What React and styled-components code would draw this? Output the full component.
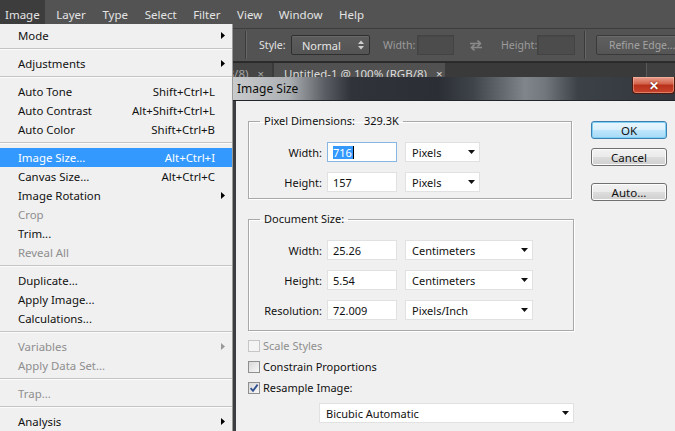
import React from 'react';
import styled, { createGlobalStyle } from 'styled-components';

const UI = `"Noto Sans", "Open Sans", sans-serif`;

const GlobalStyle = createGlobalStyle`
  html, body { margin: 0; padding: 0; background: #535353; }
  body { width: 675px; height: 431px; overflow: hidden; font-family: ${UI}; }
  * { box-sizing: border-box; }
`;

const Screen = styled.div`
  position: relative;
  width: 675px;
  height: 431px;
  overflow: hidden;
  background: #282828;
  display: flex;
  flex-direction: column;
`;

/* ---------- Photoshop app chrome ---------- */
const MenuBar = styled.div`
  height: 28px;
  flex: none;
  background: #535353;
  display: flex;
  align-items: flex-start;
  gap: 6.6px;
  font-size: 11.5px;
  color: #e4e4e4;
`;

const MenuTitle = styled.div`
  height: 24px;
  padding: 0 5px;
  display: flex;
  align-items: center;
  padding-top: 4px;
  background: ${p => (p.$open ? '#3d3d3d' : 'transparent')};
`;

const OptionsBar = styled.div`
  height: 34px;
  flex: none;
  background: #535353;
  border-top: 1px solid #3d3d3d;
  border-bottom: 1px solid #2c2c2c;
  display: flex;
  align-items: center;
  padding-left: 245px;
  font-size: 10.6px;
`;

const Groove = styled.div`
  width: 2px;
  height: 28px;
  flex: none;
  margin-left: ${p => p.$ml || 0}px;
  border-left: 1px solid #3b3b3b;
  border-right: 1px solid #666;
`;

const OptLabel = styled.span`
  width: ${p => p.$w}px;
  margin-left: ${p => p.$ml}px;
  flex: none;
  white-space: nowrap;
  color: ${p => (p.$dim ? '#9b9b9b' : '#e2e2e2')};
`;

const DarkSelect = styled.div`
  width: 79px;
  height: 20px;
  margin-left: 7px;
  flex: none;
  display: flex;
  align-items: center;
  justify-content: space-between;
  padding: 0 5px 0 10px;
  background: linear-gradient(#5d5d5d, #545454);
  border: 1px solid #2f2f2f;
  border-radius: 2px;
  box-shadow: inset 0 1px 0 #686868;
  color: #e6e6e6;
  font-size: 11px;
`;

const DarkInput = styled.div`
  width: ${p => p.$w}px;
  height: 20px;
  margin-left: ${p => p.$ml}px;
  flex: none;
  background: #4c4c4c;
  border: 1px solid #434343;
  box-shadow: inset 1px 1px 0 #474747;
`;

const SwapIcon = styled.svg`
  margin-left: 14px;
  flex: none;
`;

const DarkButton = styled.div`
  width: 92px;
  height: 20px;
  margin-left: 10px;
  flex: none;
  display: flex;
  align-items: center;
  padding-left: 12px;
  background: linear-gradient(#5f5f5f, #555);
  border: 1px solid #3a3a3a;
  border-radius: 2px;
  box-shadow: inset 0 1px 0 #6a6a6a;
  color: #a4a4a4;
  font-size: 10.4px;
  white-space: nowrap;
`;

const TabBar = styled.div`
  height: 26px;
  flex: none;
  background: #3a3a3a;
  border-top: 1px solid #2a2a2a;
  display: flex;
`;

const DocTab = styled.div`
  width: ${p => p.$w}px;
  margin-left: ${p => p.$ml || 0}px;
  flex: none;
  display: flex;
  align-items: flex-start;
  justify-content: ${p => (p.$right ? 'flex-end' : 'flex-start')};
  gap: 9px;
  padding: 3px 8px 0 10px;
  white-space: nowrap;
  overflow: hidden;
  background: ${p => (p.$active ? '#515151' : '#454545')};
  color: ${p => (p.$active ? '#dcdcdc' : '#a6a6a6')};
  font-size: 11.5px;
`;

const PanelEdge = styled.div`
  margin-left: auto;
  width: 29px;
  border-left: 1px solid #5a5a5a;
  background: #404040;
`;

const Workspace = styled.div`
  flex: 1;
  background: #282828;
`;

/* ---------- Image menu ---------- */
const Dropdown = styled.div`
  position: absolute;
  left: 0;
  top: 24px;
  width: 233px;
  bottom: 0;
  background: #f0f0f0;
  border-right: 1px solid #9a9a9a;
  padding-top: 2px;
  font-size: 11.4px;
`;

const MenuRow = styled.div`
  height: 19px;
  display: flex;
  align-items: center;
  padding-left: 18px;
  white-space: nowrap;
  color: ${p => (p.$active ? '#fff' : p.$disabled ? '#8e8e8e' : '#111')};
  background: ${p => (p.$active ? '#3399ff' : 'transparent')};
`;

const Shortcut = styled.span`
  margin-left: auto;
`;

const ArrowCell = styled.span`
  width: 17px;
  flex: none;
  display: flex;
  align-items: center;
  padding-left: 6px;
  margin-left: ${p => (p.$push ? 'auto' : '0')};
`;

const MenuSep = styled.div`
  height: 9px;
  padding-top: 3px;
  &::before {
    content: '';
    display: block;
    height: 1px;
    background: #c4c4c4;
    box-shadow: 0 1px 0 #fbfbfb;
  }
`;

/* ---------- Image Size dialog ---------- */
const Dialog = styled.div`
  position: absolute;
  left: 233px;
  top: 77px;
  right: 0;
  bottom: 0;
  display: flex;
  flex-direction: column;
  font-size: 11px;
  color: #111;
`;

const TitleBar = styled.div`
  height: 24px;
  flex: none;
  display: flex;
  align-items: flex-start;
  border-bottom: 1px solid #22262b;
  background: linear-gradient(
    90deg,
    #c8cacc 0px,
    #aeb1b4 55px,
    #5a5e64 92px,
    #30343a 118px,
    #2b2f35 205px,
    #3f434a 240px,
    #80848b 292px,
    #72767d 312px,
    #3c4047 345px,
    #33373d 442px
  );
`;

const TitleText = styled.span`
  padding: 3px 0 0 4px;
  font-size: 12px;
  color: #0c0c0c;
`;

const CloseButton = styled.div`
  margin-left: auto;
  width: 43px;
  height: 17px;
  display: flex;
  align-items: center;
  justify-content: center;
  border: 1px solid #4a1a10;
  border-top: none;
  border-radius: 0 0 4px 4px;
  background: linear-gradient(#e8a08e 0%, #d3644c 42%, #b9321b 52%, #c8452c 100%);
  box-shadow: inset 0 0 0 1px rgba(255, 200, 180, 0.45);
  color: #fff;
  font-size: 12px;
  font-weight: bold;
  text-shadow: 0 0 2px #5a1005;
`;

const Body = styled.div`
  flex: 1;
  display: flex;
  gap: 17px;
  background: #f0f0f0;
  border-left: 3px solid #3c3d40;
  padding-left: 12px;
`;

const LeftCol = styled.div`
  width: 326px;
  flex: none;
  padding-top: 12px;
  display: flex;
  flex-direction: column;
  align-items: flex-start;
`;

const Group = styled.fieldset`
  margin: ${p => p.$mt || 0}px 0 0 0;
  padding: ${p => p.$pt}px 0 ${p => p.$pb}px 0;
  width: ${p => p.$w}px;
  min-width: 0;
  border: 1px solid #a8a8a8;
  box-shadow: 1px 1px 0 #fff, inset 1px 1px 0 #fff;
  display: flex;
  flex-direction: column;
  gap: 10px;
`;

const Legend = styled.legend`
  margin-left: 11px;
  padding: 0 4px;
  font-size: 11px;
  line-height: 16px;
  color: #111;
`;

const LegendValue = styled.span`
  margin-left: 9px;
`;

const FieldRow = styled.div`
  height: 20px;
  display: flex;
  align-items: center;
`;

const FieldLabel = styled.span`
  width: 73px;
  flex: none;
  text-align: right;
  margin-right: 5px;
  white-space: nowrap;
`;

const TextBox = styled.div`
  width: 70px;
  height: 20px;
  flex: none;
  display: flex;
  align-items: center;
  padding-left: 5px;
  background: #fff;
  border: 1px solid ${p => (p.$focus ? '#86b6e3' : '#e1e1e1')};
`;

const Selected = styled.span`
  background: #3399ff;
  color: #fff;
  line-height: 13px;
  padding-right: 1px;
  box-shadow: 1px 0 0 #000;
`;

const DropBox = styled.div`
  width: ${p => p.$w}px;
  height: 20px;
  margin-left: ${p => p.$ml || 8}px;
  margin-top: ${p => p.$mt || 0}px;
  flex: none;
  display: flex;
  align-items: center;
  justify-content: space-between;
  padding: 0 4px 0 6px;
  background: #fff;
  border: 1px solid #e1e1e1;
`;

const CheckList = styled.div`
  margin-top: 4px;
  display: flex;
  flex-direction: column;
`;

const CheckRow = styled.div`
  height: 21px;
  display: flex;
  align-items: center;
  gap: 3px;
  color: ${p => (p.$disabled ? '#8e8e8e' : '#111')};
`;

const Box = styled.span`
  width: 12px;
  height: 12px;
  flex: none;
  display: flex;
  align-items: center;
  justify-content: center;
  border: 1px solid ${p => (p.$disabled ? '#c6c6c6' : '#8e8f8f')};
  background: ${p =>
    p.$disabled ? '#f4f4f4' : 'linear-gradient(135deg, #d8d8d8, #f8f8f8)'};
`;

const RightCol = styled.div`
  width: 76px;
  flex: none;
  padding-top: 20px;
  display: flex;
  flex-direction: column;
`;

const DlgButton = styled.div`
  height: 18px;
  margin-top: ${p => p.$mt || 0}px;
  display: flex;
  align-items: center;
  justify-content: center;
  border: 1px solid ${p => (p.$default ? '#3c7fb1' : '#707070')};
  border-radius: 3px;
  background: ${p =>
    p.$default
      ? 'linear-gradient(#eaf6fd 0%, #d9f0fc 50%, #bee6fd 51%, #a7d9f5 100%)'
      : 'linear-gradient(#f2f2f2 0%, #ebebeb 50%, #dddddd 51%, #cfcfcf 100%)'};
  box-shadow: inset 0 0 0 1px ${p => (p.$default ? '#7fd0f5' : '#fcfcfc')};
  color: #111;
  font-size: 11.5px;
`;

/* ---------- small drawings ---------- */
const SubArrow = ({ dim }) => (
  <svg width="4" height="7" viewBox="0 0 4 7">
    <polygon points="0,0 4,3.5 0,7" fill={dim ? '#9a9a9a' : '#000'} />
  </svg>
);

const DownArrow = () => (
  <svg width="7" height="4" viewBox="0 0 7 4">
    <polygon points="0,0 7,0 3.5,4" fill="#111" />
  </svg>
);

const Spinner = () => (
  <svg width="6" height="10" viewBox="0 0 6 10">
    <polygon points="0,4 6,4 3,0.5" fill="#cfcfcf" />
    <polygon points="0,6 6,6 3,9.5" fill="#cfcfcf" />
  </svg>
);

const Check = () => (
  <svg width="10" height="10" viewBox="0 0 10 10">
    <path d="M1.6 5.2 L4 7.8 L8.6 1.6" stroke="#2f4f8f" strokeWidth="1.8" fill="none" />
  </svg>
);

const menuItems = [
  { label: 'Mode', sub: true },
  'sep',
  { label: 'Adjustments', sub: true },
  'sep',
  { label: 'Auto Tone', sc: 'Shift+Ctrl+L' },
  { label: 'Auto Contrast', sc: 'Alt+Shift+Ctrl+L' },
  { label: 'Auto Color', sc: 'Shift+Ctrl+B' },
  'sep',
  { label: 'Image Size...', sc: 'Alt+Ctrl+I', active: true },
  { label: 'Canvas Size...', sc: 'Alt+Ctrl+C' },
  { label: 'Image Rotation', sub: true },
  { label: 'Crop', disabled: true },
  { label: 'Trim...' },
  { label: 'Reveal All', disabled: true },
  'sep',
  { label: 'Duplicate...' },
  { label: 'Apply Image...' },
  { label: 'Calculations...' },
  'sep',
  { label: 'Variables', sub: true, disabled: true },
  { label: 'Apply Data Set...', disabled: true },
  'sep',
  { label: 'Trap...', disabled: true },
  'sep',
  { label: 'Analysis', sub: true },
];

const topMenus = ['Image', 'Layer', 'Type', 'Select', 'Filter', 'View', 'Window', 'Help'];

export default function App() {
  return (
    <>
      <GlobalStyle />
      <Screen>
        <MenuBar>
          {topMenus.map((m, i) => (
            <MenuTitle key={m} $open={i === 0}>{m}</MenuTitle>
          ))}
        </MenuBar>

        <OptionsBar>
          <Groove />
          <OptLabel $w={25} $ml={12}>Style:</OptLabel>
          <DarkSelect>
            <span>Normal</span>
            <Spinner />
          </DarkSelect>
          <OptLabel $w={29} $ml={13} $dim>Width:</OptLabel>
          <DarkInput $w={37} $ml={5} />
          <SwapIcon width="16" height="16" viewBox="0 0 16 16">
            <path d="M2 6.5h10.5M9.5 3.5l3 3-3 3" stroke="#8a8a8a" strokeWidth="1.6" fill="none" />
            <path d="M14 10.5H3.5M6.5 7.5l-3 3 3 3" stroke="#8a8a8a" strokeWidth="1.6" fill="none" />
          </SwapIcon>
          <OptLabel $w={34} $ml={17} $dim>Height:</OptLabel>
          <DarkInput $w={38} $ml={2} />
          <Groove $ml={9} />
          <DarkButton>Refine Edge...</DarkButton>
        </OptionsBar>

        <TabBar>
          <DocTab $w={272} $right>
            <span>Untitled-2 @ 66.7% (RGB/8)</span>
            <span>×</span>
          </DocTab>
          <DocTab $w={171} $ml={2} $active>
            <span>Untitled-1 @ 100% (RGB/8)</span>
            <span>×</span>
          </DocTab>
          <PanelEdge />
        </TabBar>
        <Workspace />

        <Dropdown>
          {menuItems.map((it, i) =>
            it === 'sep' ? (
              <MenuSep key={i} />
            ) : (
              <MenuRow key={i} $active={it.active} $disabled={it.disabled}>
                <span>{it.label}</span>
                {it.sc && <Shortcut>{it.sc}</Shortcut>}
                <ArrowCell $push={!it.sc}>
                  {it.sub && <SubArrow dim={it.disabled} />}
                </ArrowCell>
              </MenuRow>
            )
          )}
        </Dropdown>

        <Dialog>
          <TitleBar>
            <TitleText>Image Size</TitleText>
            <CloseButton>✕</CloseButton>
          </TitleBar>
          <Body>
            <LeftCol>
              <Group $w={324} $pt={13} $pb={6}>
                <Legend>
                  Pixel Dimensions:<LegendValue>329.3K</LegendValue>
                </Legend>
                <FieldRow>
                  <FieldLabel>Width:</FieldLabel>
                  <TextBox $focus>
                    <Selected>716</Selected>
                  </TextBox>
                  <DropBox $w={75}>
                    <span>Pixels</span>
                    <DownArrow />
                  </DropBox>
                </FieldRow>
                <FieldRow>
                  <FieldLabel>Height:</FieldLabel>
                  <TextBox>157</TextBox>
                  <DropBox $w={75}>
                    <span>Pixels</span>
                    <DownArrow />
                  </DropBox>
                </FieldRow>
              </Group>

              <Group $w={326} $pt={13} $pb={10} $mt={12}>
                <Legend>Document Size:</Legend>
                <FieldRow>
                  <FieldLabel>Width:</FieldLabel>
                  <TextBox>25.26</TextBox>
                  <DropBox $w={128}>
                    <span>Centimeters</span>
                    <DownArrow />
                  </DropBox>
                </FieldRow>
                <FieldRow>
                  <FieldLabel>Height:</FieldLabel>
                  <TextBox>5.54</TextBox>
                  <DropBox $w={128}>
                    <span>Centimeters</span>
                    <DownArrow />
                  </DropBox>
                </FieldRow>
                <FieldRow>
                  <FieldLabel>Resolution:</FieldLabel>
                  <TextBox>72.009</TextBox>
                  <DropBox $w={128}>
                    <span>Pixels/Inch</span>
                    <DownArrow />
                  </DropBox>
                </FieldRow>
              </Group>

              <CheckList>
                <CheckRow $disabled>
                  <Box $disabled />
                  <span>Scale Styles</span>
                </CheckRow>
                <CheckRow>
                  <Box />
                  <span>Constrain Proportions</span>
                </CheckRow>
                <CheckRow>
                  <Box>
                    <Check />
                  </Box>
                  <span>Resample Image:</span>
                </CheckRow>
              </CheckList>
              <DropBox $w={255} $ml={71} $mt={5}>
                <span>Bicubic Automatic</span>
                <DownArrow />
              </DropBox>
            </LeftCol>

            <RightCol>
              <DlgButton $default>OK</DlgButton>
              <DlgButton $mt={9}>Cancel</DlgButton>
              <DlgButton $mt={17}>Auto...</DlgButton>
            </RightCol>
          </Body>
        </Dialog>
      </Screen>
    </>
  );
}
